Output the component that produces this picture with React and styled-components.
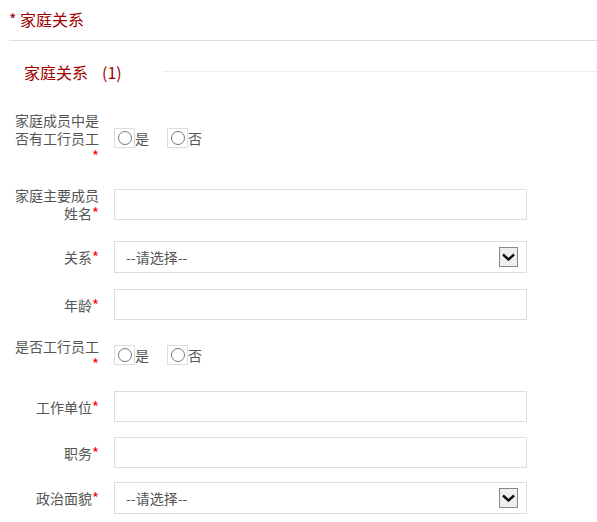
import React from "react";
import styled, { createGlobalStyle } from "styled-components";

const GlobalStyle = createGlobalStyle`
  body {
    margin: 0;
    background: #fff;
    font-family: "Noto Sans CJK SC", "Microsoft YaHei", sans-serif;
  }
`;

const Page = styled.div`
  padding-left: 9px;
  width: 588px;
`;

// 맨 위 제목줄
const Header = styled.div`
  height: 40px;
  line-height: 38px;
  border-bottom: 1px solid #ddd;
  color: #a00000;
  font-size: 16px;
`;

const SubTitle = styled.div`
  display: flex;
  align-items: center;
  height: 22px;
  margin-top: 20px;
  padding-left: 15px;
  color: #a00000;
  font-size: 16px;
`;

const Count = styled.span`
  margin-left: 14px;
`;

const SubLine = styled.div`
  flex: 1;
  margin-left: 41px;
  border-top: 1px solid #eee;
  margin-top: -2px;
`;

const Form = styled.div`
  margin-top: 28px;
`;

const Row = styled.div`
  display: flex;
  align-items: center;
  margin-bottom: ${(p) => p.$space}px;
`;

const Label = styled.div`
  width: 90px;
  flex: none;
  text-align: right;
  font-size: 14px;
  line-height: 18px;
  color: #555;
`;

const Star = styled.span`
  color: #f00;
  font-size: 15px;
`;

const Control = styled.div`
  margin-left: 15px;
  display: flex;
  align-items: center;
`;

const Input = styled.input`
  box-sizing: border-box;
  width: 413px;
  height: 31px;
  border: 1px solid #ddd;
  outline: none;
  padding: 0 8px;
  font: inherit;
`;

const Select = styled.div`
  box-sizing: border-box;
  width: 413px;
  height: 32px;
  border: 1px solid #ddd;
  display: flex;
  align-items: center;
  justify-content: space-between;
  padding: 0 8px 0 11px;
  font-size: 14px;
  color: #555;
`;

const Arrow = styled.div`
  box-sizing: border-box;
  width: 19px;
  height: 20px;
  border: 1px solid #888;
  background: #efefef;
  display: flex;
  align-items: center;
  justify-content: center;
`;

const RadioItem = styled.label`
  display: flex;
  align-items: center;
  font-size: 14px;
  line-height: 18px;
  color: #555;
  margin-right: 18px;
`;

const RadioBox = styled.span`
  box-sizing: border-box;
  width: 21px;
  height: 20px;
  border: 1px solid #ddd;
  display: flex;
  align-items: center;
  justify-content: center;
`;

const Circle = styled.span`
  box-sizing: border-box;
  width: 14px;
  height: 14px;
  border: 1px solid #777;
  border-radius: 50%;
`;

function Radio({ text }) {
  return (
    <RadioItem>
      <RadioBox>
        <Circle />
      </RadioBox>
      {text}
    </RadioItem>
  );
}

function FakeSelect() {
  return (
    <Select>
      <span>--请选择--</span>
      <Arrow>
        <svg width="13" height="8" viewBox="0 0 13 8">
          <path d="M1 1.5 L6.5 6.5 L12 1.5" fill="none" stroke="#111" strokeWidth="2.4" />
        </svg>
      </Arrow>
    </Select>
  );
}

function App() {
  return (
    <Page>
      <GlobalStyle />
      <Header>* 家庭关系</Header>
      <SubTitle>
        家庭关系<Count>(1)</Count>
        <SubLine />
      </SubTitle>
      <Form>
        <Row $space={21}>
          <Label>
            家庭成员中是否有工行员工<Star>*</Star>
          </Label>
          <Control>
            <Radio text="是" />
            <Radio text="否" />
          </Control>
        </Row>
        <Row $space={19}>
          <Label>
            家庭主要成员姓名<Star>*</Star>
          </Label>
          <Control>
            <Input />
          </Control>
        </Row>
        <Row $space={16}>
          <Label>
            关系<Star>*</Star>
          </Label>
          <Control>
            <FakeSelect />
          </Control>
        </Row>
        <Row $space={17}>
          <Label>
            年龄<Star>*</Star>
          </Label>
          <Control>
            <Input />
          </Control>
        </Row>
        <Row $space={18}>
          <Label>
            是否工行员工<Star>*</Star>
          </Label>
          <Control>
            <Radio text="是" />
            <Radio text="否" />
          </Control>
        </Row>
        <Row $space={15}>
          <Label>
            工作单位<Star>*</Star>
          </Label>
          <Control>
            <Input />
          </Control>
        </Row>
        <Row $space={14}>
          <Label>
            职务<Star>*</Star>
          </Label>
          <Control>
            <Input />
          </Control>
        </Row>
        <Row $space={14}>
          <Label>
            政治面貌<Star>*</Star>
          </Label>
          <Control>
            <FakeSelect />
          </Control>
        </Row>
      </Form>
    </Page>
  );
}

export default App;
